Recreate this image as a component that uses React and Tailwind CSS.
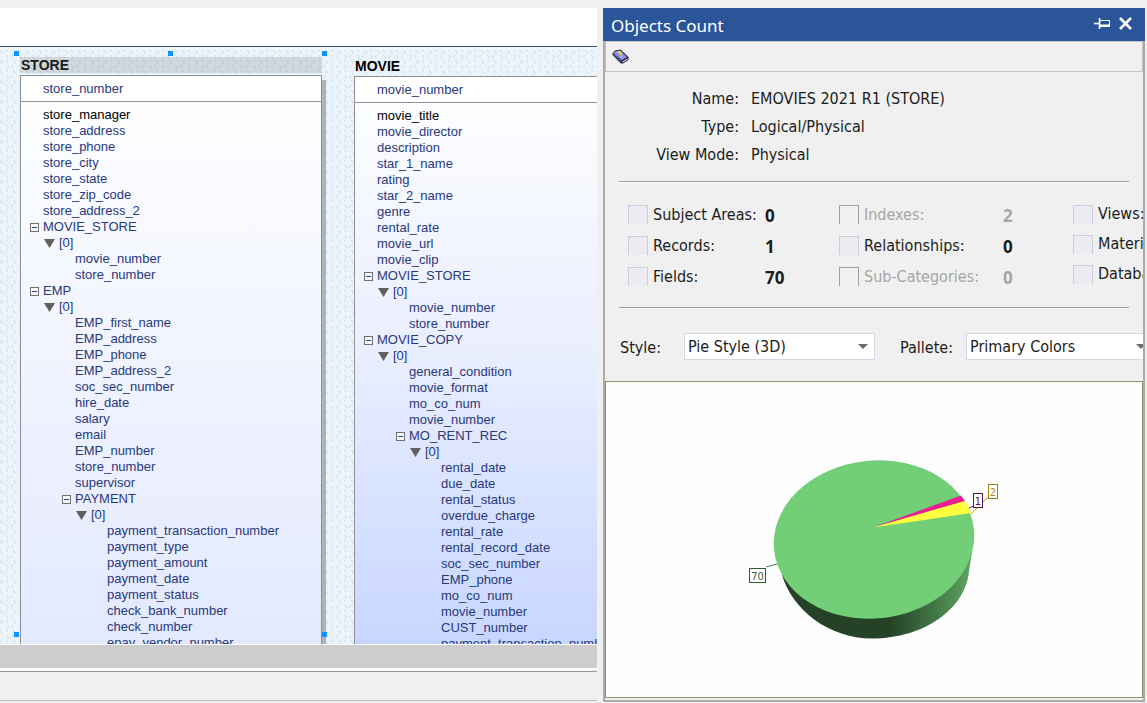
const cx = (...a) => a.filter(Boolean).join(" ");

const STORE = [
  ["f", 0, "store_manager", true],
  ["f", 0, "store_address"],
  ["f", 0, "store_phone"],
  ["f", 0, "store_city"],
  ["f", 0, "store_state"],
  ["f", 0, "store_zip_code"],
  ["f", 0, "store_address_2"],
  ["g", 0, "MOVIE_STORE"],
  ["i", 0, "[0]"],
  ["f", 1, "movie_number"],
  ["f", 1, "store_number"],
  ["g", 0, "EMP"],
  ["i", 0, "[0]"],
  ["f", 1, "EMP_first_name"],
  ["f", 1, "EMP_address"],
  ["f", 1, "EMP_phone"],
  ["f", 1, "EMP_address_2"],
  ["f", 1, "soc_sec_number"],
  ["f", 1, "hire_date"],
  ["f", 1, "salary"],
  ["f", 1, "email"],
  ["f", 1, "EMP_number"],
  ["f", 1, "store_number"],
  ["f", 1, "supervisor"],
  ["g", 1, "PAYMENT"],
  ["i", 1, "[0]"],
  ["f", 2, "payment_transaction_number"],
  ["f", 2, "payment_type"],
  ["f", 2, "payment_amount"],
  ["f", 2, "payment_date"],
  ["f", 2, "payment_status"],
  ["f", 2, "check_bank_number"],
  ["f", 2, "check_number"],
  ["f", 2, "epay_vendor_number"],
];

const MOVIE = [
  ["f", 0, "movie_title", true],
  ["f", 0, "movie_director"],
  ["f", 0, "description"],
  ["f", 0, "star_1_name"],
  ["f", 0, "rating"],
  ["f", 0, "star_2_name"],
  ["f", 0, "genre"],
  ["f", 0, "rental_rate"],
  ["f", 0, "movie_url"],
  ["f", 0, "movie_clip"],
  ["g", 0, "MOVIE_STORE"],
  ["i", 0, "[0]"],
  ["f", 1, "movie_number"],
  ["f", 1, "store_number"],
  ["g", 0, "MOVIE_COPY"],
  ["i", 0, "[0]"],
  ["f", 1, "general_condition"],
  ["f", 1, "movie_format"],
  ["f", 1, "mo_co_num"],
  ["f", 1, "movie_number"],
  ["g", 1, "MO_RENT_REC"],
  ["i", 1, "[0]"],
  ["f", 2, "rental_date"],
  ["f", 2, "due_date"],
  ["f", 2, "rental_status"],
  ["f", 2, "overdue_charge"],
  ["f", 2, "rental_rate"],
  ["f", 2, "rental_record_date"],
  ["f", 2, "soc_sec_number"],
  ["f", 2, "EMP_phone"],
  ["f", 2, "mo_co_num"],
  ["f", 2, "movie_number"],
  ["f", 2, "CUST_number"],
  ["f", 2, "payment_transaction_number"],
];

const INDENT = ["pl-2", "pl-10", "pl-[72px]"];

function Row({ row }) {
  const [kind, level, text, strong] = row;
  return (
    <li className={cx("flex h-4 items-center whitespace-nowrap", INDENT[level], strong && "text-black")}>
      {kind === "f" && <span className="w-3.5 shrink-0" />}
      {kind === "g" && (
        <button type="button" aria-label={"Collapse " + text} className="flex w-3.5 shrink-0">
          <svg width="10" height="10" viewBox="0 0 10 10" shapeRendering="crispEdges">
            <rect x="1.5" y="1.5" width="8" height="8" fill="#f4f4f4" stroke="#707070" />
            <path d="M3 5.5h5" stroke="#2f4a94" />
          </svg>
        </button>
      )}
      {kind === "i" && (
        <button type="button" aria-label="Collapse item" className="flex w-[30px] shrink-0 justify-end pr-1">
          <svg width="12" height="10" viewBox="0 0 12 10">
            <path d="M1 1h11l-5.5 9z" fill="#5f5f5f" />
          </svg>
        </button>
      )}
      <span>{text}</span>
    </li>
  );
}

function Entity({ name, keyField, rows, selected }) {
  return (
    <section className="flex min-h-0 flex-1 flex-col">
      <h2
        className={cx(
          "mb-0.5 h-4 px-px text-sm leading-4 font-bold",
          selected ? "bg-[#7f7f7f]/25 text-[#1c1c1c]" : "text-black"
        )}
      >
        {name}
      </h2>
      <div
        className={cx(
          "flex min-h-0 flex-1 flex-col border border-b-0 border-[#8f9194] bg-linear-to-b from-white",
          selected
            ? "to-[#e3e9ff] shadow-[4px_5px_0_#adb3b7]"
            : "border-r-0 via-[#e9eeff] via-50% to-[#c8d6ff]"
        )}
      >
        <div className="h-[26px] shrink-0 border-b border-[#8f9194] bg-white pl-[22px] leading-[26px]">{keyField}</div>
        <ul className="min-h-0 flex-1 overflow-hidden pt-[5px]">
          {rows.map((r, i) => (
            <Row key={i} row={r} />
          ))}
        </ul>
      </div>
    </section>
  );
}

function Handle({ className }) {
  return <span className={cx("absolute size-[5px] bg-[#0a96ff]", className)} />;
}

function Canvas() {
  return (
    <div className="relative flex min-h-0 flex-1 overflow-hidden bg-[#ebf4fc] text-[13px] text-[#27397d]">
      <svg className="absolute inset-0 size-full" aria-hidden="true" shapeRendering="crispEdges">
        <defs>
          <pattern id="weave" width="13" height="10" patternUnits="userSpaceOnUse">
            <path
              d="M0 1h1v1h-1zM1 2h1v1h-1zM2 3h1v1h-1zM1 4h1v1h-1zM6 1h1v1h-1zM7 2h1v1h-1zM6 6h1v1h-1zM7 7h1v1h-1zM8 8h1v1h-1zM7 9h1v1h-1zM12 6h1v1h-1zM11 7h1v1h-1zM12 8h1v1h-1z"
              fill="#cddbe6"
            />
          </pattern>
        </defs>
        <rect width="100%" height="100%" fill="url(#weave)" />
      </svg>
      <div className="relative flex min-w-0 flex-1 gap-8 pl-5">
        <div className="relative flex w-[302px] shrink-0 flex-col pt-2">
          <Entity name="STORE" keyField="store_number" rows={STORE} selected />
          <Handle className="top-0.5 -left-1.5" />
          <Handle className="top-0.5 left-[148px]" />
          <Handle className="top-0.5 -right-[5px]" />
          <Handle className="bottom-[7px] -left-1.5" />
          <Handle className="-right-[5px] bottom-[7px]" />
        </div>
        <div className="flex min-w-0 flex-1 flex-col overflow-hidden pt-[9px]">
          <Entity name="MOVIE" keyField="movie_number" rows={MOVIE} />
        </div>
      </div>
    </div>
  );
}

const INFO = [
  ["Name:", "EMOVIES 2021 R1 (STORE)"],
  ["Type:", "Logical/Physical"],
  ["View Mode:", "Physical"],
];

function Check({ id, label, value, off, labelWidth, short }) {
  return (
    <div
      className={cx(
        "flex items-center whitespace-nowrap",
        short ? "h-[30px]" : "h-[31px]",
        off ? "text-[#a6a6a6]" : "text-[#1c1c1c]"
      )}
    >
      <input
        id={id}
        type="checkbox"
        disabled={off}
        className={cx(
          "mr-[5px] h-[19px] w-5 shrink-0 appearance-none border border-b-0",
          off ? "border-[#a0a0a0]" : "border-[#cdcbdc] bg-[#ebebf1]"
        )}
      />
      <label htmlFor={id} className={labelWidth}>
        {label}
      </label>
      {value && (
        <output htmlFor={id} className="pt-0.5 font-['Noto_Sans',sans-serif] text-[17px] font-bold">
          {value}
        </output>
      )}
    </div>
  );
}

function Combo({ id, label, value, className }) {
  return (
    <div className="flex shrink-0 items-center">
      <label htmlFor={id} className="w-16 pt-0.5">
        {label}
      </label>
      <div className={cx("relative", className)}>
        <select
          id={id}
          className="h-[27px] w-full appearance-none border border-[#d6d6e6] bg-white pr-6 pl-[3px] leading-6"
        >
          <option>{value}</option>
        </select>
        <svg className="pointer-events-none absolute top-[11px] right-[7px]" width="10" height="5" viewBox="0 0 10 5">
          <path d="M0 0h10L5 5z" fill="#6b6b6b" />
        </svg>
      </div>
    </div>
  );
}

function Pie() {
  return (
    <svg
      role="img"
      aria-label="Objects count pie chart"
      className="h-[220px] w-[290px]"
      viewBox="730 440 290 220"
      fontFamily="'DejaVu Sans Condensed', 'DejaVu Sans', sans-serif"
      fontSize="11"
    >
      <defs>
        <linearGradient id="side" x1="774" x2="974" y1="0" y2="0" gradientUnits="userSpaceOnUse">
          <stop offset="0" stopColor="#264226" />
          <stop offset=".58" stopColor="#264226" />
          <stop offset=".78" stopColor="#3f7142" />
          <stop offset="1" stopColor="#5fa864" />
        </linearGradient>
      </defs>
      <path
        d="M782 575C792 609 828 638.500 872 638.500C925 638.500 966 608 969 571L972 552L940 540L800 560Z"
        fill="url(#side)"
      />
      <ellipse cx="874" cy="539.500" rx="100.500" ry="79" transform="rotate(-6 874 539.500)" fill="#73ce78" />
      <path d="M873 527.500L961 495.500L965 501Z" fill="#f01c93" />
      <path d="M873 527.500L965 501Q969 507 971 513Z" fill="#ffff40" />
      <path d="M766 567L777 564" stroke="#3f8048" fill="none" />
      <path d="M969 508L974 506" stroke="#7d1c60" fill="none" />
      <path d="M971 514L988 497" stroke="#d0a910" fill="none" />
      <g fill="#fff" shapeRendering="crispEdges">
        <rect x="749.500" y="568.500" width="16" height="14" stroke="#2e5e33" />
        <rect x="973.500" y="493.500" width="9" height="14" stroke="#5a1246" />
        <rect x="988.500" y="484.500" width="9" height="14" stroke="#92800c" />
      </g>
      <g textAnchor="middle">
        <text x="757.500" y="579.500" fill="#3e5a41">70</text>
        <text x="978" y="504.500" fill="#5a1246">1</text>
        <text x="993" y="495.500" fill="#b08a18">2</text>
      </g>
    </svg>
  );
}

function Rule() {
  return <hr className="mx-3.5 h-0.5 border-0 border-t border-b border-t-[#9b9b9b] border-b-white" />;
}

function CountPanel() {
  return (
    <aside className="mt-2 mb-px flex w-[542px] shrink-0 flex-col">
      <header className="flex h-[33px] items-center bg-[#2a5699] pr-[13px] pl-2 text-white">
        <h1 className="flex-1 pt-0.5 font-['Noto_Sans',sans-serif] text-[17px]">Objects Count</h1>
        <button type="button" aria-label="Auto hide" className="mr-[9px] mb-0.5">
          <svg width="16" height="12" viewBox="0 0 16 12" fill="none" stroke="#fff">
            <path d="M0 5.500h5" strokeWidth="1.600" />
            <path d="M5.500 0v11" strokeWidth="1.600" />
            <path d="M6 2.500h9.500v6H6" strokeWidth="1" />
            <path d="M6 7.500h9.500" strokeWidth="2" />
          </svg>
        </button>
        <button type="button" aria-label="Close" className="mb-0.5">
          <svg width="13" height="13" viewBox="0 0 13 13">
            <path d="M1 1l11 11M12 1L1 12" stroke="#fff" strokeWidth="2.600" />
          </svg>
        </button>
      </header>
      <div className="flex min-h-0 flex-1 flex-col border-2 border-t-0 border-[#ababab] bg-[#f0f0f0]">
        <div className="flex h-[31px] shrink-0 items-center border border-[#c3c3c3] pl-1.5">
          <button type="button" aria-label="Help">
            <svg width="17" height="15" viewBox="0 0 17 15">
              <path d="M.5 4.500L3 1.500L8.500 .5L16.500 8v3L11 14.500H9L.5 6Z" fill="#23233c" />
              <path d="M1.500 4.200L3.500 2.200L8.200 1.400L15 8L9.800 11.300Z" fill="#8b93ea" />
              <path d="M1.500 5.400L9.600 12.400" stroke="#5961c4" strokeWidth="1.200" />
              <path d="M10.300 12.700L15.600 9.400v1.200L10.800 13.600z" fill="#fff" />
              <path d="M5.800 3.800q1.400-1.500 2.700-.5t-.3 2.800M8.800 7.400l.8.800" stroke="#ffee20" strokeWidth="1.400" fill="none" />
            </svg>
          </button>
        </div>
        <dl className="grid grid-cols-[134px_1fr] gap-x-3 pt-[13px] pb-3 leading-7">
          {INFO.map(([k, v]) => (
            <div key={k} className="contents">
              <dt className="text-right">{k}</dt>
              <dd>{v}</dd>
            </div>
          ))}
        </dl>
        <Rule />
        <div className="flex overflow-hidden pt-4 pb-[15px] pl-[23px]">
          <div className="w-[211px] shrink-0">
            <Check id="subject" label="Subject Areas:" value="0" labelWidth="w-28" />
            <Check id="records" label="Records:" value="1" labelWidth="w-28" />
            <Check id="fields" label="Fields:" value="70" labelWidth="w-28" />
          </div>
          <div className="w-[234px] shrink-0">
            <Check id="indexes" label="Indexes:" value="2" off labelWidth="w-[139px]" />
            <Check id="relations" label="Relationships:" value="0" labelWidth="w-[139px]" />
            <Check id="subcats" label="Sub-Categories:" value="0" off labelWidth="w-[139px]" />
          </div>
          <div className="flex shrink-0 flex-col">
            <Check id="views" label="Views:" short />
            <Check id="matviews" label="Materialized Views:" short />
            <Check id="databases" label="Databases:" short />
          </div>
        </div>
        <Rule />
        <div className="flex overflow-hidden pt-6 pb-[21px] pl-[15px]">
          <Combo id="style" label="Style:" value="Pie Style (3D)" className="w-[191px]" />
          <div className="w-[25px] shrink-0" />
          <Combo id="palette" label="Pallete:" value="Primary Colors" className="ml-0.5 w-[187px]" />
        </div>
        <div className="mb-0.5 flex min-h-0 flex-1 items-start border border-[#87946b] bg-[#fefefe] pt-[58px] pl-[124px]">
          <Pie />
        </div>
      </div>
    </aside>
  );
}

export default function App() {
  return (
    <div className="flex h-screen w-full overflow-hidden bg-[#f0f0f0] font-['DejaVu_Sans_Condensed','DejaVu_Sans',sans-serif] text-[16px] text-[#1c1c1c]">
      <main className="mr-1.5 flex min-w-0 flex-1 flex-col pt-2 font-['Liberation_Sans',Arial,sans-serif]">
        <div className="h-[39px] shrink-0 border-b border-[#2a5699] bg-white" />
        <div className="h-0.5 shrink-0 bg-[#f6f6f6]" />
        <Canvas />
        <div className="h-[26px] shrink-0 border-t border-b-2 border-white bg-[#cdcdcd]" />
        <footer className="mt-px mb-0.5 h-[30px] shrink-0 border-t border-b border-t-[#9b9b9b] border-b-[#bdbdbd]" />
      </main>
      <CountPanel />
      <div className="w-0.5 shrink-0" />
    </div>
  );
}
